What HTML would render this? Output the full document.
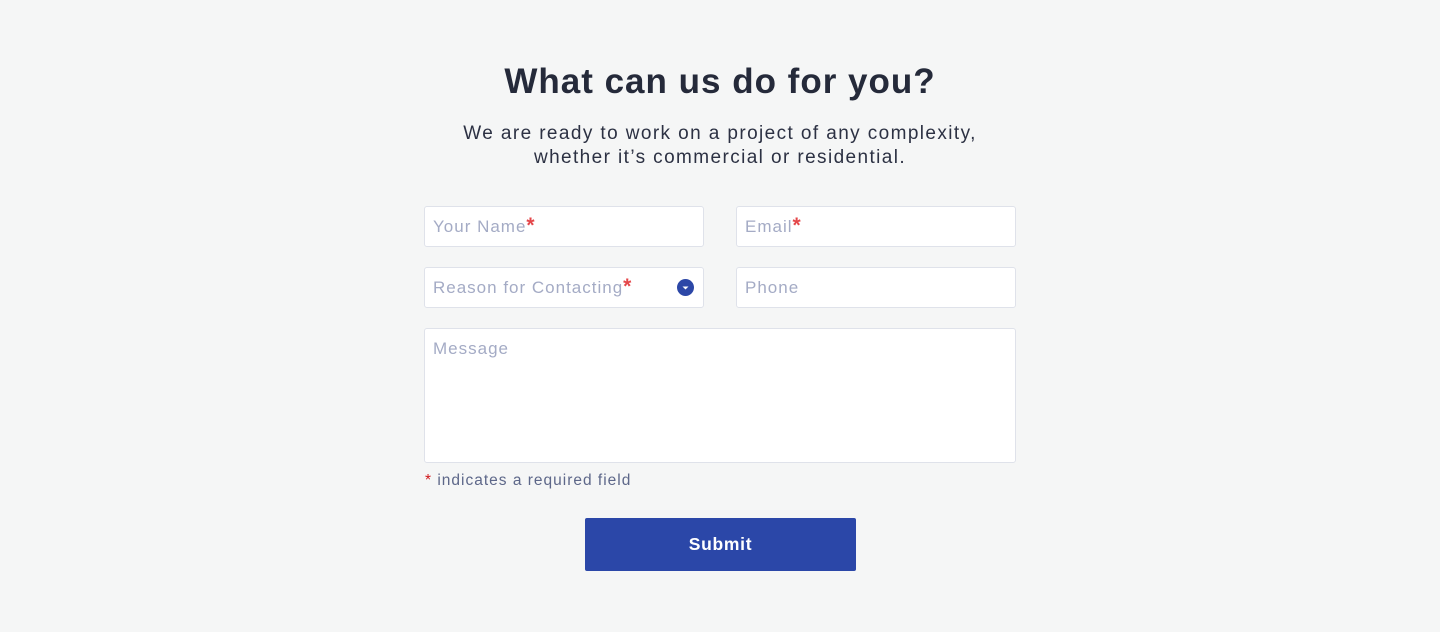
<!DOCTYPE html>
<html><head><meta charset="utf-8"><style>
*{box-sizing:border-box;margin:0;padding:0}
body{width:1440px;height:632px;background:#f5f6f6;font-family:"Liberation Sans",sans-serif;position:relative;overflow:hidden}
h1{position:absolute;top:62px;left:0;width:1440px;text-align:center;font-size:35px;font-weight:bold;color:#252a3a;letter-spacing:1px}
.sub{position:absolute;top:122px;left:0;width:1440px;text-align:center;font-size:19px;line-height:24px;color:#2c3143;letter-spacing:1.4px}
.f{position:absolute;background:#fff;border:1px solid #dfe2ea;border-radius:3px;font-size:17px;color:#a4abc5;padding-left:8px;padding-top:10px;letter-spacing:1px}
.f b{color:#e4474a;font-weight:bold;font-size:21px;line-height:17px;letter-spacing:0}
.dd{position:absolute;right:9px;top:11px;width:17px;height:17px;border-radius:50%;background:#2c47a7}
.note{position:absolute;left:425px;top:472px;font-size:15.5px;color:#5d6789;letter-spacing:1px}
.note span{color:#d0171b}
.btn{position:absolute;left:585px;top:518px;width:271px;height:53px;background:#2b47a8;border-radius:2px;color:#fff;font-weight:bold;font-size:17.5px;text-align:center;line-height:53px;letter-spacing:0.7px}
</style></head><body>
<h1>What can us do for you?</h1>
<div class="sub">We are ready to work on a project of any complexity,<br>whether it’s commercial or residential.</div>
<div class="f" style="left:424px;top:206px;width:280px;height:41px">Your Name<b>*</b></div>
<div class="f" style="left:736px;top:206px;width:280px;height:41px">Email<b>*</b></div>
<div class="f" style="left:424px;top:267px;width:280px;height:41px">Reason for Contacting<b>*</b><div class="dd"><svg width="17" height="17" viewBox="0 0 17 17"><path d="M5.5 7.5h6l-3 3z" fill="#fff"/></svg></div></div>
<div class="f" style="left:736px;top:267px;width:280px;height:41px">Phone</div>
<div class="f" style="left:424px;top:328px;width:592px;height:135px">Message</div>
<div class="note"><span>*</span> indicates a required field</div>
<div class="btn">Submit</div>
</body></html>
